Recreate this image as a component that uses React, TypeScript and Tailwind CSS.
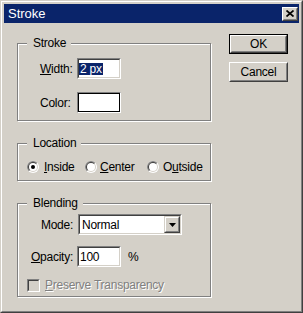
import React from "react";

const FACE = "#d4d0c8";

function Group({ legend, className, children }: { legend: string; className: string; children: React.ReactNode }) {
  return (
    <div className={`relative w-[194px] border border-[#808080] shadow-[inset_1px_1px_0_#fff,1px_1px_0_#fff] ${className}`}>
      <span className="absolute left-[9px] top-[-8px] pl-[6px] pr-[5px] leading-[14px] bg-[#d4d0c8]">{legend}</span>
      {children}
    </div>
  );
}

function Sunken({ className, inner, children }: { className: string; inner: string; children?: React.ReactNode }) {
  return (
    <div className={`border border-t-[#808080] border-l-[#808080] border-r-white border-b-white ${className}`}>
      <div className={`h-full w-full border ${inner}`}>{children}</div>
    </div>
  );
}

function Radio({ checked }: { checked?: boolean }) {
  return (
    <svg width="12" height="12" viewBox="0 0 12 12" className="shrink-0">
      <circle cx="6" cy="6" r="6" fill="#ffffff" />
      <path d="M1.757 10.243 A6 6 0 0 1 10.243 1.757 Z" fill="#808080" />
      <circle cx="6" cy="6" r="5" fill={FACE} />
      <path d="M2.464 9.536 A5 5 0 0 1 9.536 2.464 Z" fill="#404040" />
      <circle cx="6" cy="6" r="4" fill="#ffffff" />
      {checked && <circle cx="6" cy="6" r="2" fill="#000000" />}
    </svg>
  );
}

export default function App() {
  return (
    <div className="w-[303px] h-[313px] bg-[#d4d0c8] border border-t-[#d4d0c8] border-l-[#d4d0c8] border-r-[#404040] border-b-[#404040] font-['Liberation_Sans',Arial,sans-serif] text-[12px] leading-[14px] tracking-[-0.25px] text-black select-none">
      <div className="h-full border border-t-white border-l-white border-r-[#808080] border-b-[#808080] p-[2px] flex flex-col">
        {/* Title bar */}
        <div className="h-[19px] bg-[#0a246a] flex items-center justify-between pl-[4px] pr-[1px]">
          <span className="text-white text-[13px] leading-[15px] tracking-normal">Stroke</span>
          <div className="w-[16px] h-[14px] border border-t-white border-l-white border-r-[#404040] border-b-[#404040] bg-[#d4d0c8] flex">
            <div className="flex-1 border border-t-[#d4d0c8] border-l-[#d4d0c8] border-r-[#808080] border-b-[#808080] flex items-center justify-center">
              <svg width="8" height="7" viewBox="0 0 8 7">
                <path d="M0.5 0.5 L7.5 6.5 M7.5 0.5 L0.5 6.5" stroke="#000" strokeWidth="1.7" />
              </svg>
            </div>
          </div>
        </div>

        {/* Body */}
        <div className="flex items-start pl-[13px]">
          <div className="w-[195px] mt-[20px] flex flex-col">
            <Group legend="Stroke" className="h-[78px] pt-[14px] pl-[22px]">
              <div className="flex items-center h-[21px]">
                <span className="w-[37px]"><u>W</u>idth:</span>
                <Sunken className="w-[44px] h-[21px]" inner="border-t-[#404040] border-l-[#404040] border-r-[#d4d0c8] border-b-[#d4d0c8] bg-white flex items-center">
                  <span className="bg-[#0a246a] text-white px-[1px] leading-[12px] h-[12px]">2 px</span>
                </Sunken>
              </div>
              <div className="flex items-center h-[21px] mt-[13px]">
                <span className="w-[37px]">Color:</span>
                <Sunken className="w-[44px] h-[21px]" inner="border-black bg-white" />
              </div>
            </Group>

            <Group legend="Location" className="h-[38px] mt-[22px] pt-[15px] pl-[9px]">
              <div className="flex items-center h-[16px]">
                <label className="flex items-center w-[58px]">
                  <Radio checked />
                  <span className="ml-[5px]"><u>I</u>nside</span>
                </label>
                <label className="flex items-center w-[62px]">
                  <Radio />
                  <span className="ml-[3px]"><u>C</u>enter</span>
                </label>
                <label className="flex items-center">
                  <Radio />
                  <span className="ml-[4px]">O<u>u</u>tside</span>
                </label>
              </div>
            </Group>

            <Group legend="Blending" className="h-[94px] mt-[22px] pt-[10px] pl-[9px]">
              <div className="flex items-center h-[21px]">
                <span className="w-[46px] text-right">Mode:</span>
                <Sunken className="ml-[5px] w-[104px] h-[21px]" inner="border-t-[#404040] border-l-[#404040] border-r-[#d4d0c8] border-b-[#d4d0c8] bg-white flex items-center">
                  <span className="flex-1 pl-[2px]">Normal</span>
                  <div className="w-[16px] h-full border border-t-[#d4d0c8] border-l-[#d4d0c8] border-r-[#404040] border-b-[#404040] bg-[#d4d0c8]">
                    <div className="h-full border border-t-white border-l-white border-r-[#808080] border-b-[#808080] flex items-center justify-center">
                      <svg width="7" height="4" viewBox="0 0 7 4">
                        <path d="M0 0 H7 L3.5 4 Z" fill="#000" />
                      </svg>
                    </div>
                  </div>
                </Sunken>
              </div>
              <div className="flex items-center h-[21px] mt-[11px]">
                <span className="w-[46px] text-right"><u>O</u>pacity:</span>
                <Sunken className="ml-[4px] w-[44px] h-[21px]" inner="border-t-[#404040] border-l-[#404040] border-r-[#d4d0c8] border-b-[#d4d0c8] bg-white flex items-center">
                  <span className="pl-[1px]">100</span>
                </Sunken>
                <span className="ml-[7px]">%</span>
              </div>
              <div className="flex items-center h-[16px] mt-[10px]">
                <Sunken className="w-[13px] h-[13px]" inner="border-t-[#404040] border-l-[#404040] border-r-[#d4d0c8] border-b-[#d4d0c8] bg-[#d4d0c8]" />
                <span className="ml-[5px] text-[#808080] [text-shadow:1px_1px_0_#fff]"><u>P</u>reserve Transparency</span>
              </div>
            </Group>
          </div>

          {/* Buttons */}
          <div className="ml-[17px] mt-[11px] flex flex-col gap-[8px]">
            <div className="w-[59px] h-[20px] border border-black">
              <div className="h-full border border-t-white border-l-white border-r-[#404040] border-b-[#404040]">
                <div className="h-full border border-t-[#d4d0c8] border-l-[#d4d0c8] border-r-[#808080] border-b-[#808080] flex items-center justify-center">
                  OK
                </div>
              </div>
            </div>
            <div className="w-[59px] h-[20px] border border-t-white border-l-white border-r-[#404040] border-b-[#404040]">
              <div className="h-full border border-t-[#d4d0c8] border-l-[#d4d0c8] border-r-[#808080] border-b-[#808080] flex items-center justify-center">
                Cancel
              </div>
            </div>
          </div>
        </div>
      </div>
    </div>
  );
}
